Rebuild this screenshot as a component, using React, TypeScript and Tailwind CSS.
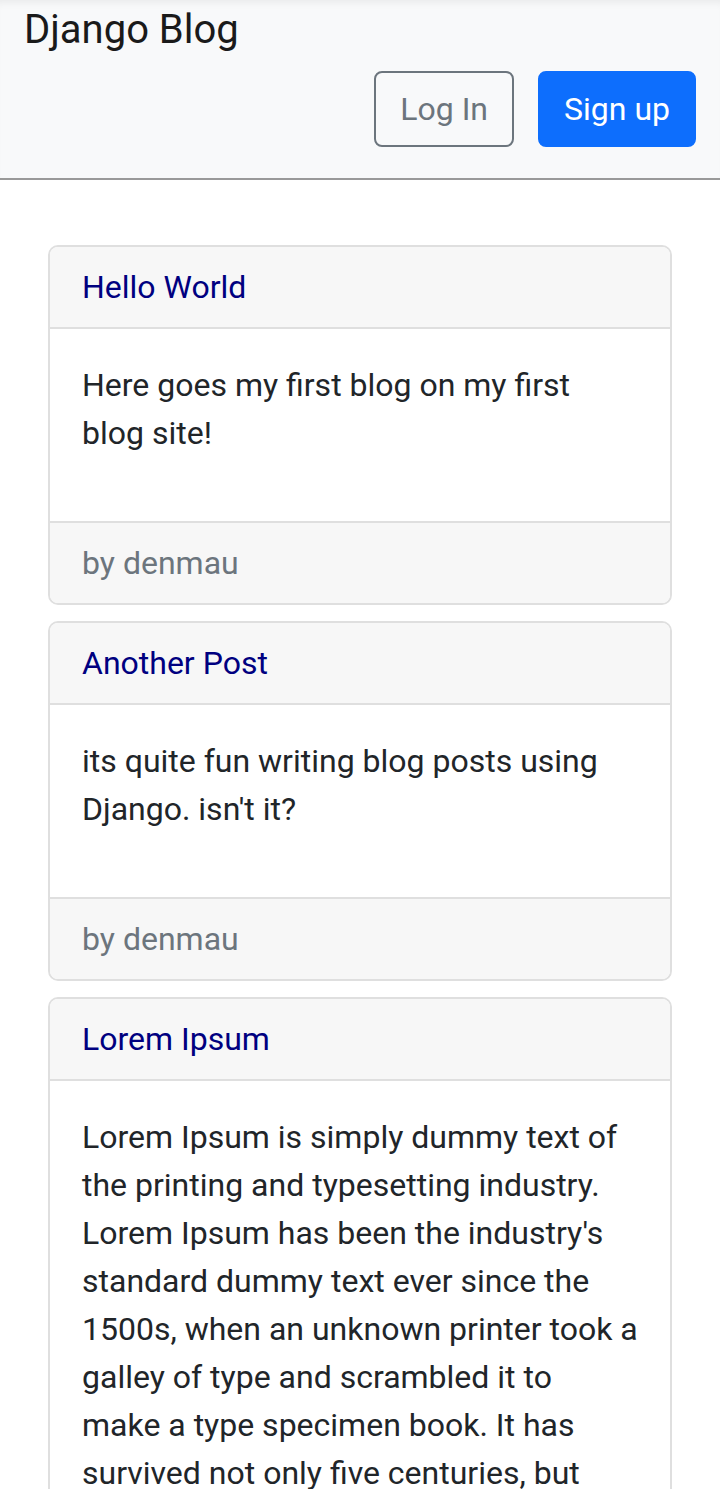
import React from 'react'

const posts = [
    {
        title: 'Hello World',
        body: 'Here goes my first blog on my first blog site!',
        author: 'denmau',
    },
    {
        title: 'Another Post',
        body: "its quite fun writing blog posts using Django. isn't it?",
        author: 'denmau',
    },
    {
        title: 'Lorem Ipsum',
        body: "Lorem Ipsum is simply dummy text of the printing and typesetting industry. Lorem Ipsum has been the industry's standard dummy text ever since the 1500s, when an unknown printer took a galley of type and scrambled it to make a type specimen book. It has survived not only five centuries, but also the leap into electronic typesetting, remaining essentially unchanged. It was popularised in the 1960s with the release of Letraset sheets containing Lorem Ipsum passages, and more recently with desktop publishing software like Aldus PageMaker including versions of Lorem Ipsum.",
        author: 'denmau',
    },
]

export default function App() {
    return (
        <div className="min-h-screen bg-white font-['Roboto','Liberation_Sans',sans-serif] text-[#212529]">
            {/* Navbar */}
            <nav className="h-[180px] bg-[#f8f9fa] border-b-2 border-[#999999] shadow-[inset_0_8px_8px_-6px_rgba(0,0,0,0.07)]">
                <a href="#" className="block pl-6 text-[40px] leading-[60px] text-[#1a1a1a]">Django Blog</a>
                <div className="mt-[11px] flex justify-end gap-6 pr-6">
                    <button className="h-[76px] px-6 rounded-lg border-2 border-[#6c757d] text-[32px] leading-[48px] text-[#6c757d]">
                        Log In
                    </button>
                    <button className="h-[76px] px-6 rounded-lg border-2 border-[#0d6efd] bg-[#0d6efd] text-[32px] leading-[48px] text-white">
                        Sign up
                    </button>
                </div>
            </nav>

            {/* Posts */}
            <main className="mx-12 mt-[65px] flex flex-col gap-4 pb-8">
                {posts.map((post) => (
                    <PostCard key={post.title} {...post} />
                ))}
            </main>
        </div>
    )
}

function PostCard({ title, body, author }: { title: string, body: string, author: string }) {
    return (
        <div className="rounded-[10px] border-2 border-[#dfdfdf] overflow-hidden">
            <div className="bg-[#f7f7f7] border-b-2 border-[#dfdfdf] px-8 py-4">
                <a href="#" className="text-[32px] leading-[48px] text-[#000080]">{title}</a>
            </div>
            <div className="px-8 pt-8 pb-8">
                <p className="mb-8 text-[32px] leading-[48px] text-[#212529]">{body}</p>
            </div>
            <div className="bg-[#f7f7f7] border-t-2 border-[#dfdfdf] px-8 py-4 text-[32px] leading-[48px] text-[#6c757d]">
                by {author}
            </div>
        </div>
    )
}
